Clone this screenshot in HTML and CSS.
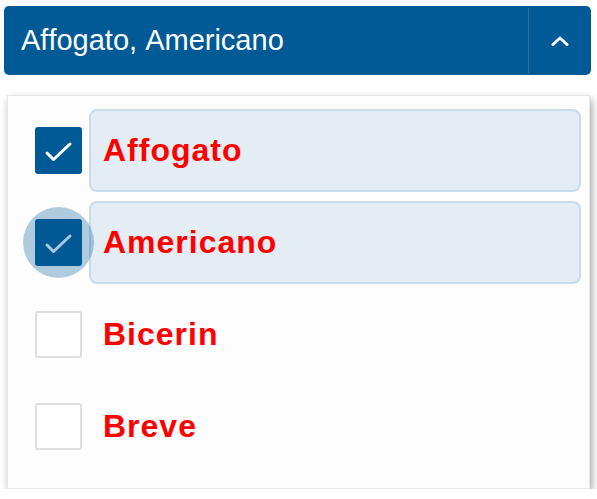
FILE: index.html
```html
<!DOCTYPE html>
<html>
<head>
<meta charset="utf-8">
<link rel="stylesheet" href="styles.css">
</head>
<body>
<div class="select">
  <div class="select-value">Affogato, Americano</div>
  <div class="select-toggle">
    <svg width="18" height="10" viewBox="0 0 18 10"><path d="M2 8.5 L9 2 L16 8.5" fill="none" stroke="#fff" stroke-width="3" stroke-linecap="round" stroke-linejoin="round"/></svg>
  </div>
</div>
<div class="panel">
  <div class="option">
    <span class="box checked">
      <svg width="47" height="47" viewBox="0 0 47 47"><path d="M12 26 L18.5 32.5 L35 17" fill="none" stroke="#fff" stroke-width="3" stroke-linecap="round" stroke-linejoin="round"/></svg>
    </span>
    <span class="label selected">Affogato</span>
  </div>
  <div class="option">
    <span class="box checked focused">
      <svg width="47" height="47" viewBox="0 0 47 47"><path d="M12 26 L18.5 32.5 L35 17" fill="none" stroke="#a9c7de" stroke-width="3" stroke-linecap="round" stroke-linejoin="round"/></svg>
    </span>
    <span class="label selected">Americano</span>
  </div>
  <div class="option">
    <span class="box"></span>
    <span class="label">Bicerin</span>
  </div>
  <div class="option">
    <span class="box"></span>
    <span class="label">Breve</span>
  </div>
</div>
</body>
</html>
```
FILE: styles.css
```css
html, body {
  margin: 0;
  padding: 0;
  background: #fff;
}
body {
  padding: 6px 6px 0 4px;
  font-family: "Liberation Sans", Arial, sans-serif;
  font-kerning: none;
}
.select {
  display: flex;
  height: 69px;
  background: #005a96;
  border-radius: 5px;
  color: #fff;
}
.select-value {
  flex: 1;
  display: flex;
  align-items: center;
  padding-left: 17px;
  font-size: 29px;
  border-right: 1px solid #2c70a2;
  margin: 2px 0;
}
.select-toggle {
  width: 62px;
  display: flex;
  align-items: center;
  justify-content: center;
}
.panel {
  box-sizing: border-box;
  margin: 20px 1px 0 3px;
  height: 394px;
  background: #fdfdfd;
  border: 1px solid #e6e6e6;
  box-shadow: 2px 4px 8px rgba(0,0,0,0.35);
  padding: 13px 8px 0 27px;
  display: flex;
  flex-direction: column;
  gap: 9px;
}
.option {
  display: flex;
  align-items: center;
  gap: 7px;
}
.box {
  position: relative;
  width: 43px;
  height: 43px;
  border: 2px solid #dedede;
  border-radius: 3px;
  background: #fff;
  flex: none;
}
.box.checked {
  width: 47px;
  height: 47px;
  border: none;
  background: #005a96;
}
.box svg {
  position: relative;
  display: block;
  z-index: 1;
}
.box.checked.focused::before {
  content: "";
  position: absolute;
  left: -12px;
  top: -12px;
  width: 71px;
  height: 71px;
  border-radius: 50%;
  background: rgba(0, 90, 150, 0.3);
  z-index: -1;
}
.box.checked.focused {
  z-index: 0;
}
.label {
  flex: 1;
  height: 79px;
  display: flex;
  align-items: center;
  padding-left: 12px;
  border: 2px solid transparent;
  border-radius: 8px;
  color: #ff0000;
  font-weight: bold;
  font-size: 32px;
  letter-spacing: 1px;
}
.label.selected {
  background: #e4ecf4;
  border-color: #cadcea;
}
```
